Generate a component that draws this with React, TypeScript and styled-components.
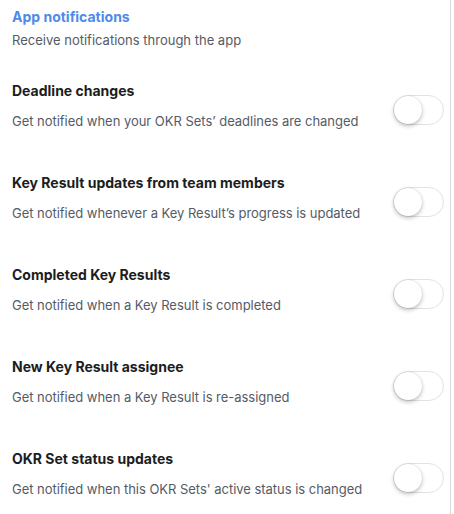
import React, { useState } from "react";
import styled, { createGlobalStyle } from "styled-components";

const Global = createGlobalStyle`
  html, body { margin: 0; padding: 0; background: #ffffff; }
  body { font-family: Inter, "Noto Sans", Arial, sans-serif; }
`;

const Panel = styled.div`
  width: 451px;
  height: 514px;
  box-sizing: border-box;
  border-right: 1px solid #d9d9d9;
  padding: 7px 0 0 12px;
  display: flex;
  flex-direction: column;
`;

const Header = styled.div`
  display: flex;
  flex-direction: column;
  gap: 3px;
  margin-bottom: 10px;
`;

const Title = styled.div`
  color: #4f8aea;
  font-size: 14px;
  font-weight: 700;
  line-height: 20px;
`;

const Subtitle = styled.div`
  color: #555b66;
  font-size: 13px;
  line-height: 20px;
`;

const Row = styled.div`
  display: flex;
  align-items: center;
  justify-content: space-between;
  padding: 21px 6px 21px 0;
  height: 92px;
  box-sizing: border-box;
`;

const TextCol = styled.div`
  display: flex;
  flex-direction: column;
  gap: 10px;
`;

const RowTitle = styled.div`
  color: #1b1d21;
  font-size: 14px;
  font-weight: 700;
  line-height: 20px;
`;

const RowDesc = styled.div`
  color: #555b66;
  font-size: 13px;
  line-height: 20px;
  letter-spacing: -0.03px;
`;

const Track = styled.button<{ $on: boolean }>`
  position: relative;
  width: 51px;
  height: 30px;
  margin-top: 8px;
  border-radius: 15px;
  border: 1px solid #e2e2e2;
  background: ${(p) => (p.$on ? "#4f8aea" : "#ffffff")};
  padding: 0;
  cursor: pointer;
  flex-shrink: 0;
`;

const Knob = styled.span<{ $on: boolean }>`
  position: absolute;
  top: 0;
  left: ${(p) => (p.$on ? "21px" : "0")};
  width: 28px;
  height: 28px;
  border-radius: 50%;
  background: #ffffff;
  box-shadow: 0 2px 4px rgba(0, 0, 0, 0.25), 0 0 1px rgba(0, 0, 0, 0.2);
`;

const items = [
  { t: "Deadline changes", d: "Get notified when your OKR Sets\u2019 deadlines are changed" },
  { t: "Key Result updates from team members", d: "Get notified whenever a Key Result\u2019s progress is updated" },
  { t: "Completed Key Results", d: "Get notified when a Key Result is completed" },
  { t: "New Key Result assignee", d: "Get notified when a Key Result is re-assigned" },
  { t: "OKR Set status updates", d: "Get notified when this OKR Sets' active status is changed" },
];

function Toggle() {
  const [on, setOn] = useState(false);
  return (
    <Track $on={on} onClick={() => setOn(!on)} aria-pressed={on}>
      <Knob $on={on} />
    </Track>
  );
}

export default function App() {
  return (
    <>
      <Global />
      <Panel>
        <Header>
          <Title>App notifications</Title>
          <Subtitle>Receive notifications through the app</Subtitle>
        </Header>
        {items.map((it) => (
          <Row key={it.t}>
            <TextCol>
              <RowTitle>{it.t}</RowTitle>
              <RowDesc>{it.d}</RowDesc>
            </TextCol>
            <Toggle />
          </Row>
        ))}
      </Panel>
    </>
  );
}
